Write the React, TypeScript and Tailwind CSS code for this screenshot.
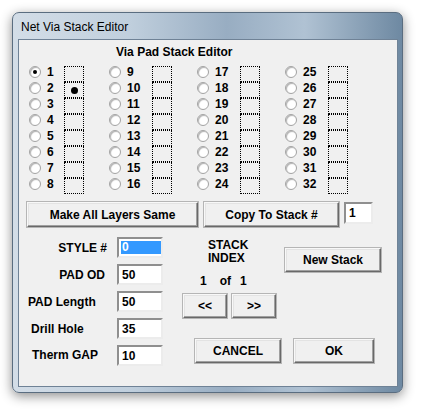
import React from "react";

const font = "font-['Liberation_Sans',Arial,sans-serif]";

const btn =
  "flex items-center justify-center bg-[#f0f0f0] border border-t-[#f8f8f8] border-l-[#f8f8f8] border-r-[#696969] border-b-[#696969] shadow-[inset_-1px_-1px_0_#a0a0a0,inset_1px_1px_0_#e3e3e3,0_0_0_1px_#b5b5b5] text-black";

const field =
  "flex items-center bg-white border-2 border-t-[#8f8f8f] border-l-[#8f8f8f] border-r-[#ececec] border-b-[#ececec] pl-[3px]";

const Radio = ({ on }: { on?: boolean }) => (
  <span className="w-[12px] h-[12px] shrink-0 rounded-full bg-white border border-[#a3a3a3] shadow-[inset_1px_1px_1px_rgba(0,0,0,0.3)] flex items-center justify-center">
    {on && <span className="w-[4px] h-[4px] rounded-full bg-black" />}
  </span>
);

const Column = ({ start, wide, sel, dot }: { start: number; wide?: boolean; sel?: number; dot?: number }) => {
  const nums = Array.from({ length: 8 }, (_, i) => start + i);
  return (
    <div className="flex">
      <div className={wide ? "w-[43px] flex flex-col -mt-[2px]" : "w-[35px] flex flex-col -mt-[2px]"}>
        {nums.map((n) => (
          <div key={n} className="h-[16px] flex items-center">
            <Radio on={n === sel} />
            <span className="ml-[6px] leading-[16px]">{n}</span>
          </div>
        ))}
      </div>
      <div className="flex flex-col">
        {nums.map((n) => (
          <div key={n} className="w-[20px] h-[16px] border border-dotted border-black flex items-center justify-center">
            {n === dot && <span className="w-[7px] h-[7px] rounded-full bg-black" />}
          </div>
        ))}
      </div>
    </div>
  );
};

const rows = [
  { label: "STYLE #", cls: "justify-end pr-[10px]", value: "0", selected: true },
  { label: "PAD OD", cls: "justify-end pr-[12px]", value: "50" },
  { label: "PAD Length", cls: "pl-[9px]", value: "50" },
  { label: "Drill Hole", cls: "pl-[12px]", value: "35" },
  { label: "Therm GAP", cls: "pl-[13px] -mt-[2px]", value: "10" },
];

export default function App() {
  return (
    <div className={`w-[423px] h-[413px] bg-white overflow-hidden ${font}`}>
      <div className="ml-[12px] mt-[12px] w-[391px] h-[381px] rounded-[7px] flex flex-col border border-[#5a6d80] shadow-[0_3px_12px_rgba(0,0,0,0.45)] bg-[linear-gradient(90deg,#d3dde7_0%,#c0cfdd_30%,#98adc2_55%,#b0c2d3_75%,#6e89a2_100%)]">
        <div className="h-[27px] pl-[8px] flex items-center text-[12px] text-black">Net Via Stack Editor</div>
        <div className="ml-[6px] w-[378px] h-[346px] bg-[#f0f0f0] shadow-[0_0_0_1px_#6f8296] text-[12px] font-bold text-black">
          <div className="pt-[5px] pl-[97px] leading-[14px]">Via Pad Stack Editor</div>

          <div className="mt-[7px] pl-[10px] flex gap-[25px]">
            <Column start={1} sel={1} dot={2} />
            <Column start={9} wide />
            <Column start={17} wide />
            <Column start={25} wide />
          </div>

          <div className="mt-[8px] pl-[8px] flex items-start">
            <div className={`${btn} w-[171px] h-[25px]`}>Make All Layers Same</div>
            <div className={`${btn} ml-[6px] w-[135px] h-[25px]`}>Copy To Stack #</div>
            <div className={`${field} ml-[5px] w-[29px] h-[22px]`}>1</div>
          </div>

          <div className="mt-[10px] flex">
            <div className="w-[144px] flex flex-col gap-[6px]">
              {rows.map((r) => (
                <div key={r.label} className="h-[21px] flex items-center">
                  <div className={`w-[98px] flex ${r.cls}`}>{r.label}</div>
                  <div className={`${field} w-[46px] h-[21px]`}>
                    {r.selected ? (
                      <span className="w-[40px] h-[13px] bg-[#3399ff] text-white leading-[13px] pl-[1px] -ml-[1px]">{r.value}</span>
                    ) : (
                      r.value
                    )}
                  </div>
                </div>
              ))}
            </div>

            <div className="ml-[20px] flex flex-col">
              <div className="flex">
                <div className="w-[93px] flex flex-col">
                  <div className="pt-[2px] pl-[25px] leading-[13px]">
                    <div>STACK</div>
                    <div>INDEX</div>
                  </div>
                  <div className="mt-[9px] pl-[17px] leading-[14px] flex">
                    <span>1</span>
                    <span className="ml-[13px]">of</span>
                    <span className="ml-[9px]">1</span>
                  </div>
                  <div className="mt-[6px] flex">
                    <div className={`${btn} w-[44px] h-[24px]`}>&lt;&lt;</div>
                    <div className={`${btn} ml-[5px] w-[44px] h-[24px]`}>&gt;&gt;</div>
                  </div>
                </div>
                <div className={`${btn} ml-[9px] mt-[11px] w-[96px] h-[24px]`}>New Stack</div>
              </div>
              <div className="mt-[21px] flex">
                <div className={`${btn} ml-[12px] w-[86px] h-[24px]`}>CANCEL</div>
                <div className={`${btn} ml-[13px] w-[80px] h-[24px] shadow-[inset_-1px_-1px_0_#a0a0a0,0_0_0_1px_#4f4f4f]`}>OK</div>
              </div>
            </div>
          </div>
        </div>
      </div>
    </div>
  );
}
